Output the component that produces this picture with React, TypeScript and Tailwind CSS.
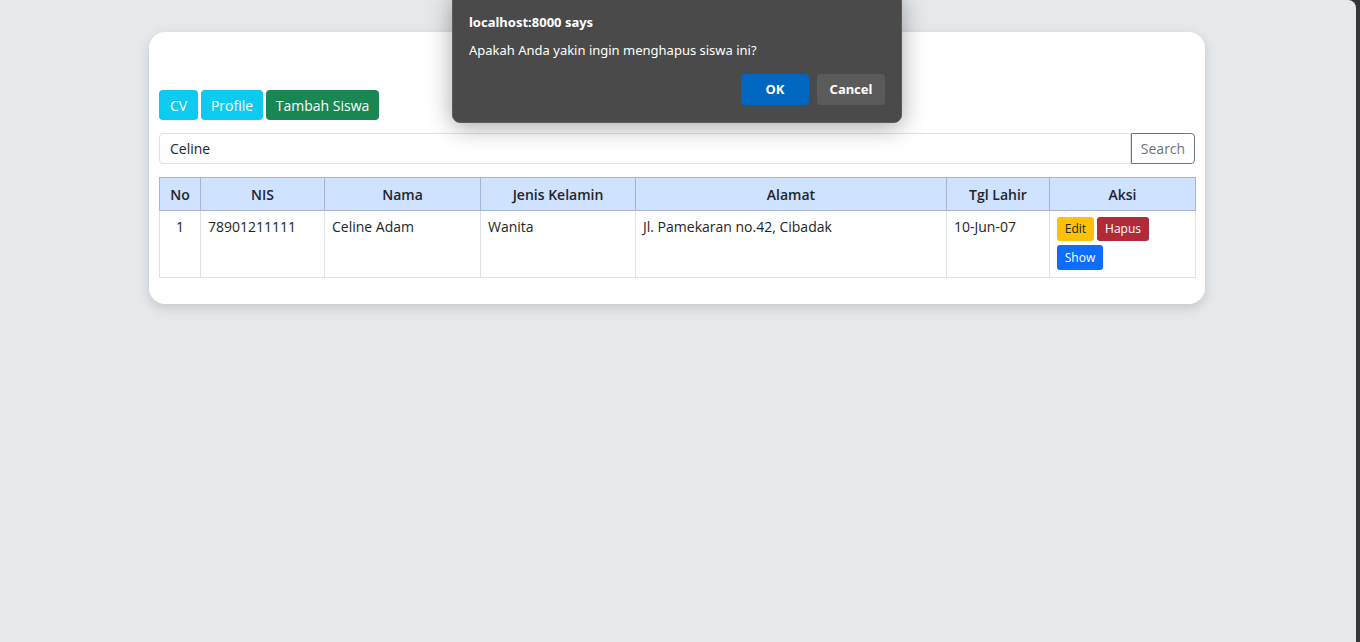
import React from "react";

const siswa = [
  {
    no: 1,
    nis: "78901211111",
    nama: "Celine Adam",
    jk: "Wanita",
    alamat: "Jl. Pamekaran no.42, Cibadak",
    tgl: "10-Jun-07",
  },
];

const ConfirmDialog = () => (
  <div
    className="absolute left-[452px] top-[-8px] w-[450px] h-[131px] rounded-[8px] bg-[#4a4a4a] border border-[#5c5c5c] shadow-[0_4px_24px_rgba(0,0,0,0.35)] px-[16px] pt-[20px] text-white"
    style={{ fontFamily: '"Noto Sans", "Open Sans", sans-serif' }}
  >
    <p className="text-[13px] font-bold leading-[18px]">localhost:8000 says</p>
    <p className="text-[13px] leading-[18px] mt-[10px]">
      Apakah Anda yakin ingin menghapus siswa ini?
    </p>
    <div className="flex justify-end gap-[8px] mt-[15px]">
      <button className="w-[68px] h-[31px] rounded-[4px] bg-[#0067c0] text-[13px] font-bold">
        OK
      </button>
      <button className="w-[68px] h-[31px] rounded-[4px] bg-[#5b5b5b] text-[13px] font-bold">
        Cancel
      </button>
    </div>
  </div>
);

export default function App() {
  return (
    <div
      className="w-[1360px] h-[642px] flex bg-[#363636] overflow-hidden"
      style={{ fontFamily: '"Open Sans", "Noto Sans", sans-serif' }}
    >
      <div className="relative w-[1356px] shrink-0 bg-[#e6e9ec] rounded-tr-[8px] pt-[32px]">
        <div className="ml-[149px] w-[1056px] bg-white rounded-[16px] shadow-[0_4px_12px_rgba(0,0,0,0.15)] px-[10px] pt-[58px] pb-[26px]">
          <div className="flex gap-[3px]">
            <button className="h-[30px] w-[39px] rounded-[4px] bg-[#0dcaf0] text-white text-[14px]">
              CV
            </button>
            <button className="h-[30px] w-[62px] rounded-[4px] bg-[#0dcaf0] text-white text-[14px]">
              Profile
            </button>
            <button className="h-[30px] w-[113px] rounded-[4px] bg-[#198754] text-white text-[14px]">
              Tambah Siswa
            </button>
          </div>

          <div className="flex mt-[13px]">
            <input
              defaultValue="Celine"
              className="flex-1 h-[31px] border border-[#dee2e6] rounded-l-[4px] px-[10px] text-[14px] text-[#212529] outline-none"
            />
            <button className="h-[31px] w-[64px] border border-[#6c757d] rounded-r-[4px] text-[14px] text-[#6c757d]">
              Search
            </button>
          </div>

          <table className="mt-[13px] w-[1036px] table-fixed border-collapse text-[14px] text-[#212529]">
            <thead>
              <tr className="bg-[#cfe2ff] h-[33px]">
                {[
                  ["No", "w-[41px]"],
                  ["NIS", "w-[124px]"],
                  ["Nama", "w-[156px]"],
                  ["Jenis Kelamin", "w-[155px]"],
                  ["Alamat", "w-[311px]"],
                  ["Tgl Lahir", "w-[103px]"],
                  ["Aksi", "w-[146px]"],
                ].map(([label, w]) => (
                  <th
                    key={label}
                    className={`${w} border border-[#a6b5cc] font-semibold text-center px-[8px]`}
                  >
                    {label}
                  </th>
                ))}
              </tr>
            </thead>
            <tbody>
              {siswa.map((s) => (
                <tr key={s.no} className="align-top h-[67px]">
                  <td className="border border-[#dee2e6] text-center px-[8px] pt-[5px]">{s.no}</td>
                  <td className="border border-[#dee2e6] px-[7px] pt-[5px]">{s.nis}</td>
                  <td className="border border-[#dee2e6] px-[7px] pt-[5px]">{s.nama}</td>
                  <td className="border border-[#dee2e6] px-[7px] pt-[5px]">{s.jk}</td>
                  <td className="border border-[#dee2e6] px-[7px] pt-[5px]">{s.alamat}</td>
                  <td className="border border-[#dee2e6] px-[7px] pt-[5px]">{s.tgl}</td>
                  <td className="border border-[#dee2e6] px-[7px] pt-[6px] pb-[6px]">
                    <div className="flex flex-wrap gap-x-[3px] gap-y-[4px]">
                      <button className="h-[24px] w-[37px] rounded-[3px] bg-[#ffc107] text-[#212529] text-[12px]">
                        Edit
                      </button>
                      <button className="h-[24px] w-[52px] rounded-[3px] bg-[#b02a37] text-white text-[12px]">
                        Hapus
                      </button>
                      <button className="h-[25px] w-[46px] rounded-[3px] bg-[#0d6efd] text-white text-[12px]">
                        Show
                      </button>
                    </div>
                  </td>
                </tr>
              ))}
            </tbody>
          </table>
        </div>

        <ConfirmDialog />
      </div>
    </div>
  );
}
